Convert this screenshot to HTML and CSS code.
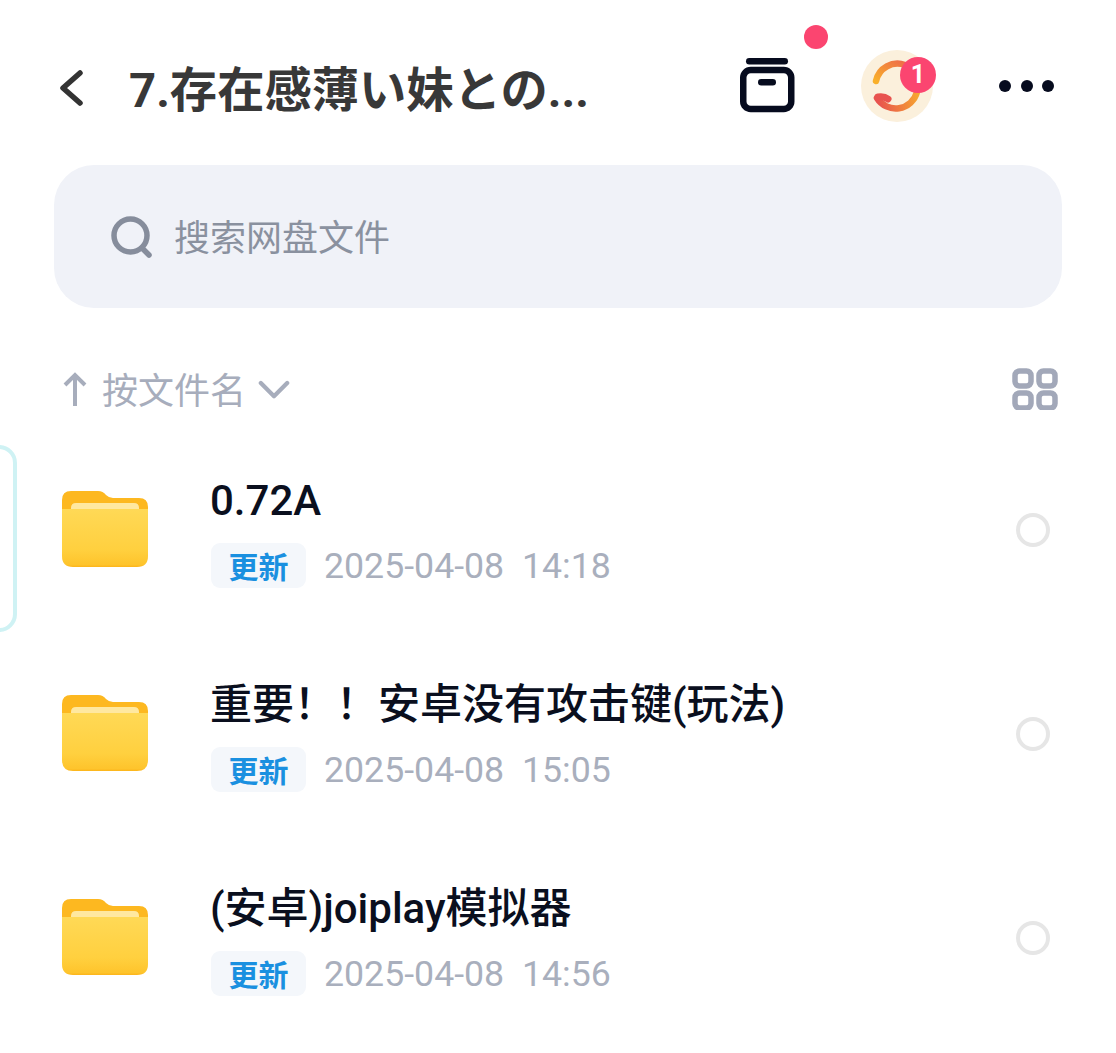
FILE: index.html
```html
<!DOCTYPE html>
<html lang="zh">
<head>
<meta charset="utf-8">
<title>网盘文件</title>
<link rel="stylesheet" href="styles.css">
</head>
<body>
<div class="edge-tab"></div>
<main class="page">
  <header class="topbar">
    <svg class="back" viewBox="0 0 26 36"><path d="M22 3 L5 18 L22 33" fill="none" stroke="#333" stroke-width="5.5" stroke-linecap="round" stroke-linejoin="round"/></svg>
    <h1 class="title">7.存在感薄い妹との...</h1>
    <div class="archive-wrap">
      <svg class="archive" viewBox="0 0 56 56"><rect x="6" y="1" width="42" height="6.5" rx="3.25" fill="#060b1e"/><rect x="3.25" y="13" width="48" height="39" rx="7.5" fill="none" stroke="#060b1e" stroke-width="6.5"/><rect x="18" y="22" width="18" height="6.5" rx="3.25" fill="#060b1e"/></svg>
      <span class="dot"></span>
    </div>
    <div class="avatar">
      <svg class="sync" viewBox="0 0 72 72">
        <defs>
          <linearGradient id="g1" x1="0" y1="1" x2="1" y2="0"><stop offset="0" stop-color="#f9b02a"/><stop offset="1" stop-color="#ee6f48"/></linearGradient>
          <linearGradient id="g2" gradientUnits="userSpaceOnUse" x1="58" y1="40" x2="16" y2="50"><stop offset="0" stop-color="#f7a92e"/><stop offset="1" stop-color="#e8534f"/></linearGradient>
        </defs>
        <path d="M15 31 A22 22 0 0 1 44 15" fill="none" stroke="url(#g1)" stroke-width="6.5" stroke-linecap="round"/>
        <path d="M56 42 A22 22 0 0 1 16 48" fill="none" stroke="url(#g2)" stroke-width="6.5" stroke-linecap="round"/>
        <path d="M17 47 Q23 46 27 49" fill="none" stroke="#e8534f" stroke-width="7" stroke-linecap="round"/>
      </svg>
      <span class="badge">1</span>
    </div>
    <div class="more"><i></i><i></i><i></i></div>
  </header>

  <div class="search">
    <svg class="search-icon" viewBox="0 0 42 42"><circle cx="19.5" cy="19.5" r="16.5" fill="none" stroke="#868d9c" stroke-width="5.5"/><path d="M31 32 L38 39" stroke="#868d9c" stroke-width="5.5" stroke-linecap="round"/></svg>
    <span class="search-text">搜索网盘文件</span>
  </div>

  <div class="sortbar">
    <svg class="up" viewBox="0 0 24 36"><path d="M12 34 V3 M2 13 L12 3 L22 13" fill="none" stroke="#a7adbc" stroke-width="4"/></svg>
    <span class="sort-text">按文件名</span>
    <svg class="down" viewBox="0 0 34 22"><path d="M3 3 L17 17 L31 3" fill="none" stroke="#a7adbc" stroke-width="4.5" stroke-linecap="round" stroke-linejoin="round"/></svg>
    <svg class="grid-icon" viewBox="0 0 46 42"><g fill="none" stroke="#a2a8b9" stroke-width="5.5"><rect x="3" y="3" width="16" height="15" rx="4.5"/><rect x="27" y="3" width="16" height="15" rx="4.5"/><rect x="3" y="25" width="16" height="15" rx="4.5"/><rect x="27" y="25" width="16" height="15" rx="4.5"/></g></svg>
  </div>

  <ul class="list">
    <li class="row">
      <svg class="folder" viewBox="0 0 86 78"><use href="#folder-shape"/></svg>
      <div class="info">
        <div class="name">0.72A</div>
        <div class="meta"><span class="tag">更新</span><span class="date">2025-04-08&nbsp; 14:18</span></div>
      </div>
      <span class="radio"></span>
    </li>
    <li class="row">
      <svg class="folder" viewBox="0 0 86 78"><use href="#folder-shape"/></svg>
      <div class="info">
        <div class="name">重要！！安卓没有攻击键(玩法)</div>
        <div class="meta"><span class="tag">更新</span><span class="date">2025-04-08&nbsp; 15:05</span></div>
      </div>
      <span class="radio"></span>
    </li>
    <li class="row">
      <svg class="folder" viewBox="0 0 86 78"><use href="#folder-shape"/></svg>
      <div class="info">
        <div class="name">(安卓)joiplay模拟器</div>
        <div class="meta"><span class="tag">更新</span><span class="date">2025-04-08&nbsp; 14:56</span></div>
      </div>
      <span class="radio"></span>
    </li>
  </ul>
</main>
<svg class="defs" width="0" height="0">
  <defs>
    <linearGradient id="fbody" x1="0" y1="0" x2="0" y2="1"><stop offset="0" stop-color="#ffd956"/><stop offset="0.7" stop-color="#ffd03f"/><stop offset="0.96" stop-color="#fec42c"/><stop offset="1" stop-color="#fcb41a"/></linearGradient>
    <g id="folder-shape">
      <path d="M0 10 Q0 1 9 1 H36 Q41 1 44 5 Q47 8 51 8 H77 Q86 8 86 17 V40 H0 Z" fill="#fdb820"/>
      <path d="M9 18 Q9 13 14 13 H72 Q77 13 77 18 V22 H9 Z" fill="#ffe8a0"/>
      <path d="M0 19 H86 V66 Q86 77 75 77 H11 Q0 77 0 66 Z" fill="url(#fbody)"/>
    </g>
  </defs>
</svg>
</body>
</html>
```
FILE: styles.css
```css
* { box-sizing: border-box; }
html, body { margin: 0; padding: 0; background: #fff; }
body { width: 1116px; height: 1053px; overflow: hidden; position: relative; font-family: "Noto Sans CJK SC", "Noto Sans", sans-serif; }
.defs { position: absolute; }
.page { padding: 0 54px; display: flex; flex-direction: column; }

.edge-tab { position: absolute; left: -30px; top: 445px; width: 47px; height: 187px; border: 4px solid #cff2f4; border-radius: 18px; }

.topbar { height: 165px; display: flex; align-items: center; padding-top: 8px; position: relative; }
.back { width: 26px; height: 36px; margin-left: 4px; margin-top: 2px; flex: none; }
.title { margin: 9px 0 0 45px; width: 500px; font-size: 47.3px; font-weight: 700; color: #383838; white-space: nowrap; font-family: "Roboto", "Noto Sans CJK JP", sans-serif; line-height: 50px; }
.archive-wrap { width: 56px; height: 56px; margin-left: 111px; margin-top: -4px; position: relative; flex: none; }
.archive { width: 56px; height: 56px; display: block; }
.dot { position: absolute; left: 64px; top: -32px; width: 24px; height: 24px; border-radius: 50%; background: #fb4570; }
.avatar { width: 72px; height: 72px; margin-left: 65px; border-radius: 50%; background: #fbf0dc; position: relative; flex: none; margin-top: -2px; }
.sync { width: 72px; height: 72px; display: block; }
.badge { position: absolute; left: 39px; top: 7px; width: 36px; height: 36px; border-radius: 50%; background: #fb4570; color: #fff; font: 700 25px/36px "Roboto", sans-serif; text-align: center; }
.more { display: flex; gap: 9.5px; margin-left: 66px; margin-top: -2px; }
.more i { width: 12px; height: 12px; border-radius: 50%; background: #060b1e; display: block; }

.search { height: 143px; background: #f0f2f8; border-radius: 40px; display: flex; align-items: center; padding-left: 57px; }
.search-icon { width: 42px; height: 42px; flex: none; }
.search-text { margin-left: 21px; margin-top: -4px; font-size: 36px; color: #8a919f; line-height: 48px; }

.sortbar { display: flex; align-items: center; height: 44px; margin-top: 60px; padding-left: 9px; }
.up { width: 24px; height: 36px; flex: none; }
.sort-text { font-size: 36px; color: #a7adbc; margin: -4px 0 0 15px; line-height: 44px; }
.down { width: 32px; height: 21px; margin-left: 12px; flex: none; }
.grid-icon { width: 46px; height: 42px; margin: -2px 4px 0 auto; flex: none; }

.list { list-style: none; margin: 16px 0 0; padding: 0; }
.row { height: 204px; display: flex; align-items: center; padding-left: 8px; }
.folder { width: 86px; height: 78px; flex: none; margin-top: -2px; }
.info { margin-left: 63px; padding-top: 5px; flex: 1; }
.name { font: 500 42px/50px "Roboto", "Noto Sans CJK SC", sans-serif; color: #0a0f1e; white-space: nowrap; margin-left: -1px; }
.meta { display: flex; align-items: center; margin-top: 16px; }
.tag { width: 95px; height: 45px; background: #f4f7fb; border-radius: 9px; color: #1a90e0; font-size: 30px; font-weight: 700; line-height: 45px; text-align: center; flex: none; }
.date { margin: 2px 0 0 18px; font: 400 35.7px/45px "Roboto", sans-serif; color: #a9afbd; white-space: nowrap; }
.radio { width: 34px; height: 34px; border-radius: 50%; border: 4px solid #e6e6e6; margin-right: 12px; flex: none; }
```
